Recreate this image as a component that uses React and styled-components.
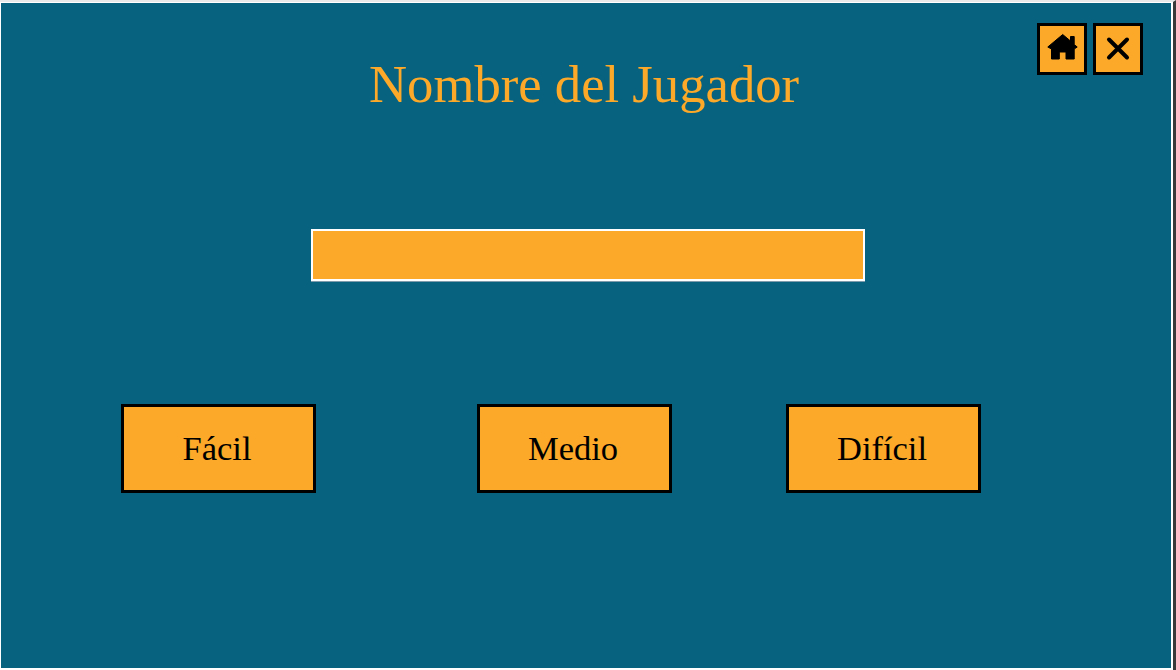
import React from "react";
import styled, { createGlobalStyle } from "styled-components";

const GlobalStyle = createGlobalStyle`
  html, body {
    margin: 0;
    padding: 0;
    background: #ffffff;
    overflow: hidden;
  }
`;

const Frame = styled.div`
  box-sizing: border-box;
  width: 1176px;
  height: 670px;
  padding: 1px 1px 2px 1px;
  border-top: 2px solid #e9e9e9;
  border-right: 3px solid #3a3a3a;
  background: #ffffff;
  display: flex;
  flex-direction: column;
`;

const Panel = styled.main`
  box-sizing: border-box;
  flex: 1;
  width: 1170px;
  align-self: flex-start;
  background: #07627f;
  padding: 20px 28px 0 120px;
  font-family: "Liberation Serif", "Times New Roman", serif;
`;

const Header = styled.header`
  display: grid;
  grid-template-columns: 1fr auto;
  height: 206px;
`;

const Title = styled.h1`
  margin: 31px 0 0 248px;
  font-size: 52.7px;
  line-height: 60px;
  font-weight: 400;
  color: #fca828;
  white-space: nowrap;
`;

const Actions = styled.div`
  display: flex;
  gap: 6px;
  align-items: flex-start;
`;

const IconButton = styled.button`
  box-sizing: border-box;
  width: 50px;
  height: 52px;
  padding: 0;
  border: 3px solid #000000;
  background: #fca828;
  color: #000000;
  display: flex;
  align-items: center;
  justify-content: center;
`;

const NameField = styled.input`
  box-sizing: border-box;
  display: block;
  width: 554px;
  height: 52px;
  margin-left: 190px;
  border: 2px solid #ffffff;
  background: #fca828;
  outline: none;
  box-shadow: 0 1px 0 #7d9bab;
`;

const Levels = styled.div`
  display: flex;
  margin-top: 123px;
`;

const LevelButton = styled.button`
  box-sizing: border-box;
  width: 195px;
  height: 89px;
  margin-left: ${(props) => props.$offset}px;
  padding: 0 3px 0 0;
  border: 3px solid #000000;
  background: #fca828;
  color: #000000;
  font-family: inherit;
  font-size: 34.5px;
`;

const HomeIcon = () => (
  <svg width="44" height="46" viewBox="0 0 44 46">
    <path
      d="M22.7 8.5 L30.5 15 V10.5 H34.2 V18.5 L37.2 21 L34.2 23 V33 H26 V26 H19.3 V33 H11.5 V23 L7.8 21 Z"
      fill="#000000"
      stroke="#000000"
      strokeWidth="1"
      strokeLinejoin="round"
    />
  </svg>
);

const CloseIcon = () => (
  <svg width="44" height="46" viewBox="0 0 44 46">
    <path
      d="M13 13.5 L31 31.5 M31 13.5 L13 31.5"
      fill="none"
      stroke="#000000"
      strokeWidth="4"
      strokeLinecap="round"
    />
  </svg>
);

const levels = [
  { label: "Fácil", offset: 0 },
  { label: "Medio", offset: 161 },
  { label: "Difícil", offset: 114 },
];

const App = () => {
  return (
    <Frame>
      <GlobalStyle />
      <Panel>
        <Header>
          <Title>Nombre del Jugador</Title>
          <Actions>
            <IconButton aria-label="Inicio">
              <HomeIcon />
            </IconButton>
            <IconButton aria-label="Cerrar">
              <CloseIcon />
            </IconButton>
          </Actions>
        </Header>
        <NameField type="text" />
        <Levels>
          {levels.map((level) => (
            <LevelButton key={level.label} $offset={level.offset}>
              {level.label}
            </LevelButton>
          ))}
        </Levels>
      </Panel>
    </Frame>
  );
};

export default App;
